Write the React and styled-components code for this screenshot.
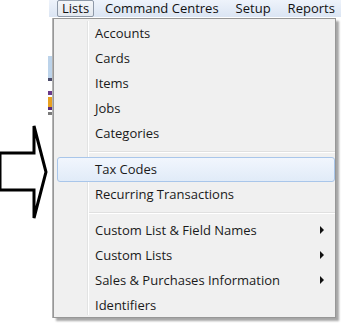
import React from 'react';
import styled, {createGlobalStyle} from "styled-components";

const GlobalStyle = createGlobalStyle`
  html, body {
    margin: 0;
    padding: 0;
    background: #fff;
  }
`;

const Page = styled.div`
  display: flex;
  width: 341px;
  height: 324px;
  overflow: hidden;
  background: #fff;
  font-family: "Open Sans", "Noto Sans", sans-serif;
`;

const ArrowColumn = styled.div`
  width: 48px;
  flex-shrink: 0;
  padding-top: 123px;
`;

const Main = styled.div`
  flex: 1;
  display: flex;
  flex-direction: column;
`;

const MenuBar = styled.div`
  display: flex;
  align-items: center;
  height: 17px;
  padding-left: 8px;
  margin-left: 1px;
  background: linear-gradient(#eef3fb, #dbe5f3);
  white-space: nowrap;
`;

const BarItem = styled.div`
  flex-shrink: 0;
  height: 17px;
  line-height: 15px;
  padding: 0 ${p => p.active ? '4px' : '0'};
  margin-left: ${p => p.space || 0}px;
  font-size: 13px;
  color: #111;
  box-sizing: border-box;
  border: ${p => p.active ? '1px solid #8e99a8' : '1px solid transparent'};
  border-radius: 2px;
  background: ${p => p.active ? 'linear-gradient(#f4f6f9, #e3e8ef)' : 'transparent'};
`;

const Body = styled.div`
  display: flex;
  margin-top: 1px;
`;

const WindowEdge = styled.div`
  width: 4px;
  height: 300px;
  display: flex;
  flex-direction: column;
  border-right: 1px solid #b4b4b4;
`;

const EdgeBit = styled.div`
  height: ${p => p.h}px;
  margin-top: ${p => p.gap}px;
  background: ${p => p.color};
`;

const Menu = styled.div`
  width: 283px;
  height: 300px;
  box-sizing: border-box;
  padding: 2px 0;
  background: #f0f0f0;
  border: 1px solid #979797;
  box-shadow: 3px 3px 2px rgba(0, 0, 0, 0.35);
  position: relative;
`;

const Gutter = styled.div`
  position: absolute;
  left: 33px;
  top: 2px;
  bottom: 2px;
  width: 1px;
  background: #e2e3e3;
  border-right: 1px solid #fff;
`;

const Item = styled.div`
  position: relative;
  display: flex;
  align-items: center;
  justify-content: space-between;
  height: 25px;
  box-sizing: border-box;
  margin: ${p => p.highlighted ? '0 0 0 3px' : '0'};
  padding: 0 10px 1px ${p => p.highlighted ? '37px' : '40px'};
  font-size: 13px;
  color: #1a1a1a;
  white-space: nowrap;
  border: ${p => p.highlighted ? '1px solid #a9c6ea' : '1px solid transparent'};
  border-radius: 3px;
  background: ${p => p.highlighted ? 'linear-gradient(#f1f6fd, #e1ebf8)' : 'transparent'};
`;

const Separator = styled.div`
  height: 11px;
  display: flex;
  align-items: center;
  padding-left: 33px;

  &::after {
    content: "";
    flex: 1;
    height: 1px;
    background: #e0e0e0;
    border-bottom: 1px solid #fff;
  }
`;

const SubArrow = styled.span`
  width: 0;
  height: 0;
  border-top: 4px solid transparent;
  border-bottom: 4px solid transparent;
  border-left: 4px solid #111;
`;

const groups = [
  ['Accounts', 'Cards', 'Items', 'Jobs', 'Categories'],
  ['Tax Codes', 'Recurring Transactions'],
  ['Custom List & Field Names', 'Custom Lists', 'Sales & Purchases Information', 'Identifiers'],
];

const withSubmenu = ['Custom List & Field Names', 'Custom Lists', 'Sales & Purchases Information'];

function BlockArrow() {
  return (
    <svg width="48" height="100" viewBox="0 0 48 100">
      <path
        d="M0 30 L34 30 L34 3 Q40 26 46 49 Q40 72 34 95 L34 67 L0 67 Z"
        fill="#fff"
        stroke="#000"
        strokeWidth="3"
        strokeLinejoin="miter"
      />
    </svg>
  );
}

function App() {
  return (
    <Page>
      <GlobalStyle />
      <ArrowColumn>
        <BlockArrow />
      </ArrowColumn>
      <Main>
        <MenuBar>
          <BarItem active>Lists</BarItem>
          <BarItem space={10}>Command Centres</BarItem>
          <BarItem space={15}>Setup</BarItem>
          <BarItem space={15}>Reports</BarItem>
        </MenuBar>
        <Body>
          <WindowEdge>
            <EdgeBit gap={38} h={22} color="#bcd3ea" />
            <EdgeBit gap={0} h={3} color="#4a4a6a" />
            <EdgeBit gap={10} h={4} color="#6a3a8a" />
            <EdgeBit gap={2} h={10} color="#e8a020" />
            <EdgeBit gap={0} h={3} color="#5a2a7a" />
            <EdgeBit gap={2} h={3} color="#7a7a7a" />
          </WindowEdge>
          <Menu>
            <Gutter />
            {groups.map((group, gi) => (
              <React.Fragment key={gi}>
                {gi > 0 && <Separator />}
                {group.map(label => (
                  <Item key={label} highlighted={label === 'Tax Codes'}>
                    <span>{label}</span>
                    {withSubmenu.includes(label) && <SubArrow />}
                  </Item>
                ))}
              </React.Fragment>
            ))}
          </Menu>
        </Body>
      </Main>
    </Page>
  );
}

export default App;
